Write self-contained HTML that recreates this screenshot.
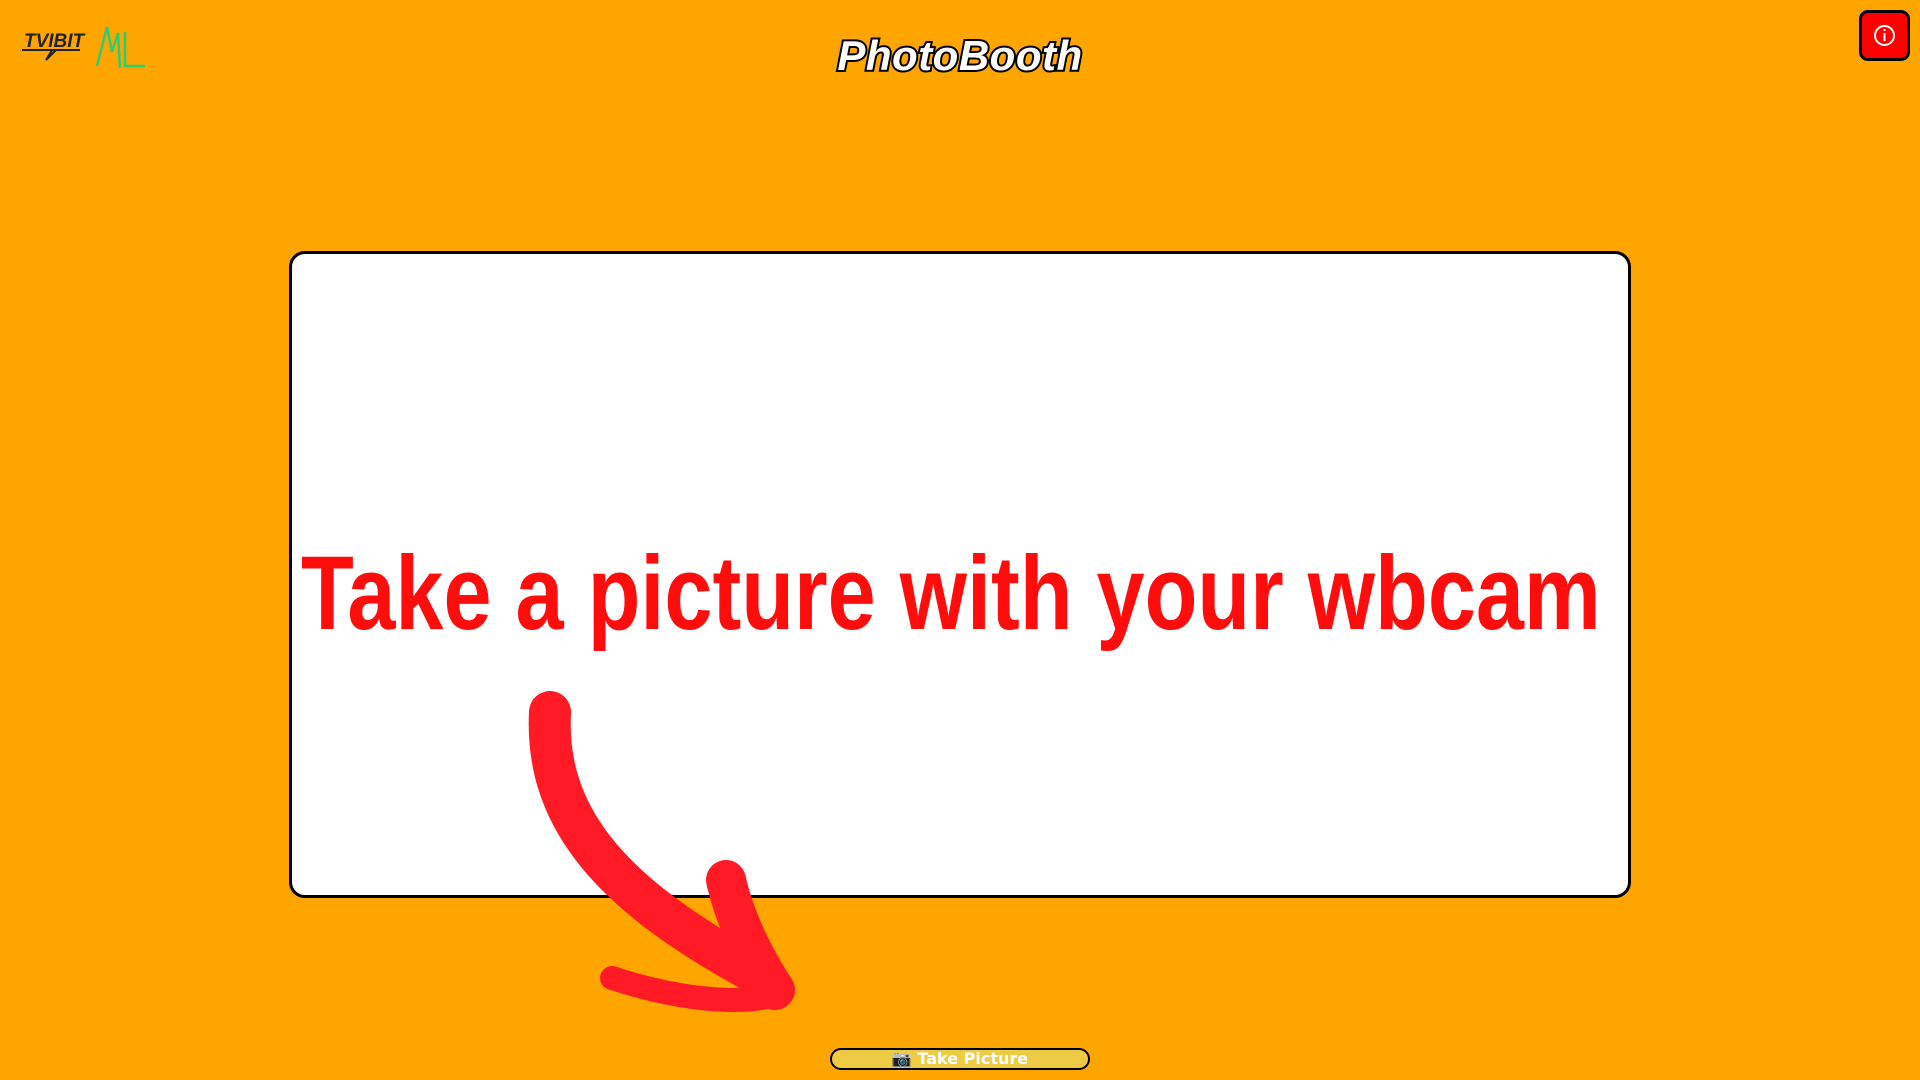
<!DOCTYPE html>
<html><head><meta charset="utf-8"><style>
html,body{margin:0;padding:0;width:1920px;height:1080px;overflow:hidden;background:#ffa500;font-family:"Liberation Sans",sans-serif;}
.title{position:absolute;left:0;width:1920px;top:32px;text-align:center;font-size:42px;font-weight:bold;font-style:italic;color:#fff;-webkit-text-stroke:4px #000;paint-order:stroke fill;letter-spacing:0.5px;}
.card{position:absolute;left:289px;top:251px;width:1336px;height:641px;background:#fff;border:3px solid #000;border-radius:16px;}
.msg{position:absolute;left:301px;top:541px;font-size:105px;font-weight:bold;color:#ff0d0d;white-space:nowrap;transform:scaleX(0.823);transform-origin:0 0;line-height:1;}
.btn{position:absolute;left:830px;top:1048px;width:256px;height:18px;background:#eecb45;border:2px solid #000;border-radius:11px;color:#fff;font:bold 16px "DejaVu Sans",sans-serif;text-align:center;line-height:18px;}
.info{position:absolute;left:1859px;top:10px;width:45px;height:45px;background:#f00;border:3px solid #000;border-radius:9px;}
</style></head><body>
<svg style="position:absolute;left:0;top:0" width="160" height="80">
<text x="24" y="47" font-family="Liberation Sans" font-weight="bold" font-style="italic" font-size="19" fill="#222">TVIBIT</text>
<path d="M22 50 H80 M56 50 L46 60 L52 50" stroke="#222" stroke-width="2" fill="none"/>
<path d="M97 66 L107 27 L112 52 L118 33 L120 68 M125 32 L125 66 L145 66" stroke="#2ecc71" stroke-width="2.5" fill="none"/>
</svg>
<div class="title">PhotoBooth</div>
<div class="info"><svg width="45" height="45"><circle cx="22.5" cy="22.5" r="9.5" stroke="#fff" stroke-width="2" fill="none"/><rect x="21.5" y="20" width="2" height="8" fill="#fff"/><rect x="21.5" y="16" width="2" height="2" fill="#fff"/></svg></div>
<div class="card"></div>
<div class="msg">Take a picture with your wbcam</div>
<svg style="position:absolute;left:0;top:0" width="1920" height="1080">
<g stroke="#ff1a25" stroke-linecap="round" stroke-linejoin="round" fill="none">
<path d="M550 712 C545 810 600 890 760 975" stroke-width="42"/>
<path d="M726 880 C735 920 755 960 775 990" stroke-width="40"/>
<path d="M612 978 C680 1000 740 1005 775 995" stroke-width="24"/>
</g>
</svg>
<div class="btn">📷 Take Picture</div>
</body></html>
